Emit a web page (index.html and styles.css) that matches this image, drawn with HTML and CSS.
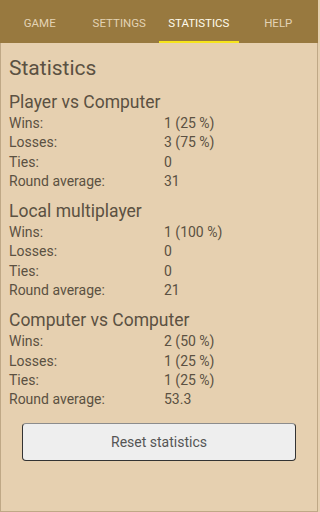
FILE: index.html
```html
<!DOCTYPE html>
<html>
<head>
<meta charset="utf-8">
<link rel="stylesheet" href="styles.css">
</head>
<body>
<div class="app">
  <nav class="tabs">
    <div class="tab">GAME</div>
    <div class="tab">SETTINGS</div>
    <div class="tab active">STATISTICS</div>
    <div class="tab">HELP</div>
  </nav>
  <main class="content">
    <h1 class="title">Statistics</h1>
    <section class="section">
      <h2 class="heading">Player vs Computer</h2>
      <div class="grid">
        <span>Wins:</span><span>1 (25 %)</span>
        <span>Losses:</span><span>3 (75 %)</span>
        <span>Ties:</span><span>0</span>
        <span>Round average:</span><span>31</span>
      </div>
    </section>
    <section class="section">
      <h2 class="heading">Local multiplayer</h2>
      <div class="grid">
        <span>Wins:</span><span>1 (100 %)</span>
        <span>Losses:</span><span>0</span>
        <span>Ties:</span><span>0</span>
        <span>Round average:</span><span>21</span>
      </div>
    </section>
    <section class="section">
      <h2 class="heading">Computer vs Computer</h2>
      <div class="grid">
        <span>Wins:</span><span>2 (50 %)</span>
        <span>Losses:</span><span>1 (25 %)</span>
        <span>Ties:</span><span>1 (25 %)</span>
        <span>Round average:</span><span>53.3</span>
      </div>
    </section>
    <button class="reset">Reset statistics</button>
  </main>
</div>
</body>
</html>
```
FILE: styles.css
```css
html, body {
  margin: 0;
  padding: 0;
}
body {
  width: 318px;
  height: 512px;
  font-family: Roboto, "Noto Sans", sans-serif;
  background: #e6d0b0;
  overflow: hidden;
}
.app {
  display: flex;
  flex-direction: column;
  height: 512px;
}
.tabs {
  display: flex;
  height: 43px;
  background: #98793f;
  flex: none;
}
.tab {
  flex: 1;
  display: flex;
  align-items: center;
  justify-content: center;
  box-sizing: border-box;
  padding-top: 4px;
  border-bottom: 2px solid transparent;
  font-size: 11.5px;
  font-weight: 400;
  color: #e3d3b5;
}
.tab.active {
  color: #fffbec;
  border-bottom-color: #f6e51c;
}
.content {
  flex: 1;
  box-sizing: border-box;
  border: 1px solid #bfa886;
  border-top: none;
  padding: 11px 8px 0 8px;
  color: #5b5142;
  display: flex;
  flex-direction: column;
}
.title {
  margin: 0;
  font-size: 21px;
  font-weight: 400;
  line-height: 28px;
}
.section {
  margin-top: 9px;
}
.heading {
  margin: 0;
  font-size: 17.5px;
  font-weight: 400;
  line-height: 23px;
}
.grid {
  display: grid;
  grid-template-columns: 155px 1fr;
  font-size: 14px;
  line-height: 19.3px;
}
.reset {
  margin: 13px 13px 0 13px;
  height: 38px;
  box-sizing: border-box;
  background: #eeeeee;
  border: 1px solid #333333;
  border-top-color: #8c8c8c;
  border-radius: 4px;
  font-family: Roboto, "Noto Sans", sans-serif;
  font-size: 14px;
  color: #555555;
  padding: 0;
}
```
